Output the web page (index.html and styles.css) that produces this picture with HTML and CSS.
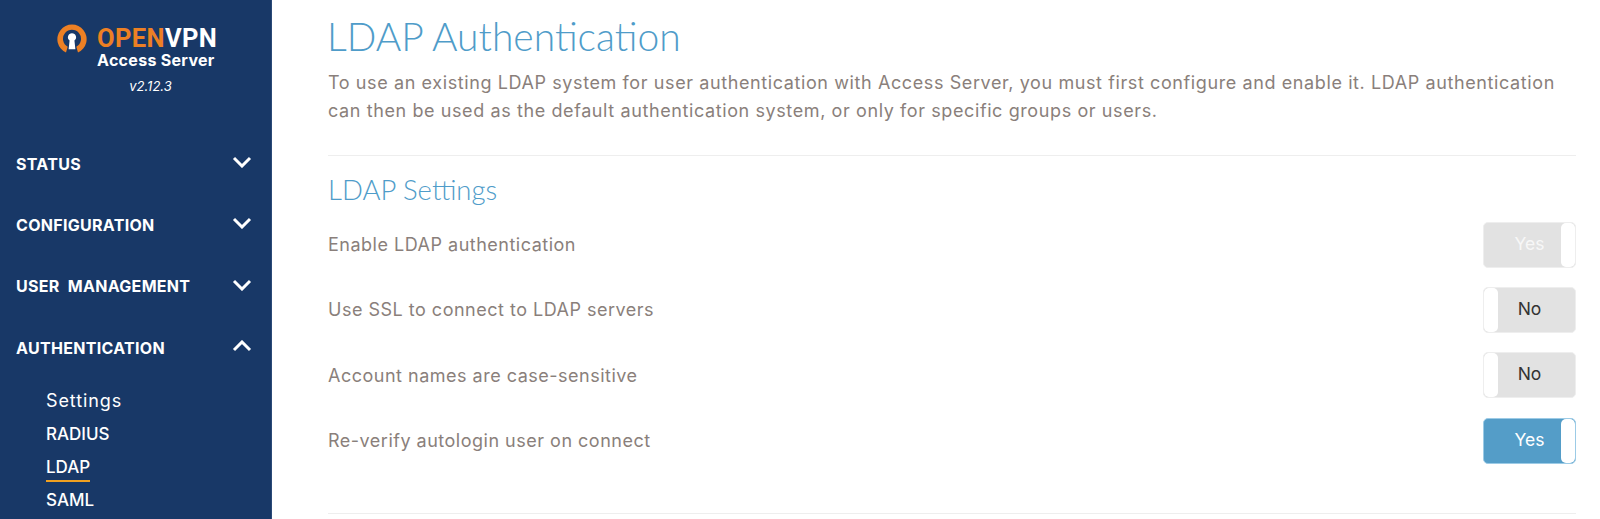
FILE: index.html
```html
<!DOCTYPE html>
<html lang="en">
<head>
  <meta charset="UTF-8">
  <title>LDAP Authentication</title>
  <link rel="stylesheet" href="styles.css">
</head>
<body>
  <div class="layout">
    <nav class="sidebar">
      <div class="brand">
        <div class="brand-row">
          <svg class="brand-icon" viewBox="0 0 32 32" aria-hidden="true">
            <path class="key-ring" d="M9.6 30.4A15.6 15.6 0 1 1 22.4 30.4L20.6 24.2A9.6 9.6 0 1 0 11.4 24.2Z"/>
            <path class="key-hole" d="M16 9.8a4.4 4.4 0 0 1 2.6 7.9L19.6 27H12.4L13.4 17.7A4.4 4.4 0 0 1 16 9.8Z"/>
          </svg>
          <div class="brand-text">
            <div class="brand-name"><span class="brand-open">OPEN</span>VPN</div>
            <div class="brand-sub">Access Server</div>
          </div>
        </div>
        <div class="brand-version">v2.12.3</div>
      </div>
      <ul class="menu">
        <li class="menu-item">STATUS
          <svg class="chev" viewBox="0 0 20 12"><path d="M2 2l8 8 8-8"/></svg>
        </li>
        <li class="menu-item">CONFIGURATION
          <svg class="chev" viewBox="0 0 20 12"><path d="M2 2l8 8 8-8"/></svg>
        </li>
        <li class="menu-item">USER&nbsp; MANAGEMENT
          <svg class="chev" viewBox="0 0 20 12"><path d="M2 2l8 8 8-8"/></svg>
        </li>
        <li class="menu-item">AUTHENTICATION
          <svg class="chev" viewBox="0 0 20 12"><path d="M2 10l8-8 8 8"/></svg>
        </li>
      </ul>
      <ul class="submenu">
        <li class="sub-settings">Settings</li>
        <li>RADIUS</li>
        <li><span class="current">LDAP</span></li>
        <li>SAML</li>
      </ul>
    </nav>
    <main class="content">
      <h1>LDAP Authentication</h1>
      <p class="intro">To use an existing LDAP system for user authentication with Access Server, you must first configure and enable it. LDAP authentication can then be used as the default authentication system, or only for specific groups or users.</p>
      <hr class="rule-top">
      <h2>LDAP Settings</h2>
      <div class="rows">
        <div class="row">
          <span>Enable LDAP authentication</span>
          <div class="toggle on disabled"><span class="toggle-label">Yes</span><span class="knob"></span></div>
        </div>
        <div class="row">
          <span>Use SSL to connect to LDAP servers</span>
          <div class="toggle off"><span class="knob"></span><span class="toggle-label">No</span></div>
        </div>
        <div class="row">
          <span>Account names are case-sensitive</span>
          <div class="toggle off"><span class="knob"></span><span class="toggle-label">No</span></div>
        </div>
        <div class="row">
          <span>Re-verify autologin user on connect</span>
          <div class="toggle on active"><span class="toggle-label">Yes</span><span class="knob"></span></div>
        </div>
      </div>
      <hr class="rule-bottom">
    </main>
  </div>
</body>
</html>
```
FILE: styles.css
```css
* { box-sizing: border-box; }
html, body { height: 100%; }
body {
  margin: 0;
  overflow: hidden;
  font-family: "Inter", "Open Sans", sans-serif;
  background: #fff;
  color: #8a7f7b;
}
.layout { display: flex; height: 519px; }

/* sidebar */
.sidebar {
  flex: 0 0 272px;
  background: #183867;
  border-right: 1px solid #2b4a78;
  color: #fff;
  overflow: hidden;
}
.brand { padding-top: 24px; }
.brand-row { display: flex; gap: 10px; padding-left: 57px; }
.brand-icon { width: 30px; height: 30px; }
.key-ring { fill: #ed8024; }
.key-hole { fill: #fff; }
.brand-text { width: 120px; }
.brand-name { font: 700 25.5px/28px "Roboto", sans-serif; letter-spacing: 0.4px; height: 28px; }
.brand-open { color: #ed8024; }
.brand-sub { font: 700 16px/18px "Inter", sans-serif; letter-spacing: 0.3px; margin-top: -1px; }
.brand-version { margin-top: 9px; padding-left: 30px; text-align: center; font-size: 13px; line-height: 16px; font-style: italic; }

.menu { list-style: none; margin: 39px 0 0; padding: 0; }
.menu-item {
  display: flex;
  justify-content: space-between;
  align-items: center;
  height: 61.3px;
  padding: 0 19px 0 16px;
  font-size: 16px;
  font-weight: 700;
  letter-spacing: 0.3px;
}
.chev { width: 20px; height: 12px; margin-top: -3px; }
.chev path { fill: none; stroke: #fff; stroke-width: 3; }

.submenu { list-style: none; margin: 6px 0 0; padding: 0 0 0 46px; font-size: 17px; font-weight: 500; }
.submenu li { height: 33.4px; line-height: 33px; }
.submenu .sub-settings { font-size: 18px; font-weight: 400; letter-spacing: 0.9px; }
.submenu .current { display: inline-block; line-height: 26px; border-bottom: 2px solid #f0a020; }

/* main */
.content { flex: 1; min-width: 0; padding: 11px 24px 0 56px; }
h1 {
  margin: 0 0 0 -1px;
  font: 300 39px/50px "Lato", sans-serif;
  color: #4f9cc9;
}
.intro {
  margin: 8px 0 0;
  font-size: 18px;
  line-height: 28px;
  letter-spacing: 0.6px;
}
hr { border: 0; border-top: 1px solid #eeeeee; margin: 0; }
.rule-top { margin-top: 30px; }
h2 {
  margin: 17px 0 0;
  font: 300 27.5px/34px "Lato", sans-serif;
  color: #4f9cc9;
}
.rows { margin-top: 5px; }
.row {
  display: flex;
  justify-content: space-between;
  align-items: center;
  height: 65.3px;
  font-size: 18px;
  letter-spacing: 0.5px;
}
.toggle {
  display: flex;
  width: 93px;
  height: 46px;
  border-radius: 5px;
  background: #e2e2e2;
  border: 1px solid #e2e2e2;
  overflow: hidden;
}
.toggle-label { flex: 1; text-align: center; font-size: 17.5px; line-height: 41px; letter-spacing: 0; }
.on .toggle-label { padding-left: 14px; }
.off .toggle-label { padding-right: 14px; }
.knob { flex: 0 0 14px; background: #fff; border-radius: 5px; }
.off { color: #333; border-color: #eee; }
.disabled { color: #f7f7f7; border-color: #eee; }
.active { background: #549dc8; border-color: #9ccbe6; color: #fff; }
.rule-bottom { margin-top: 40px; }
```
